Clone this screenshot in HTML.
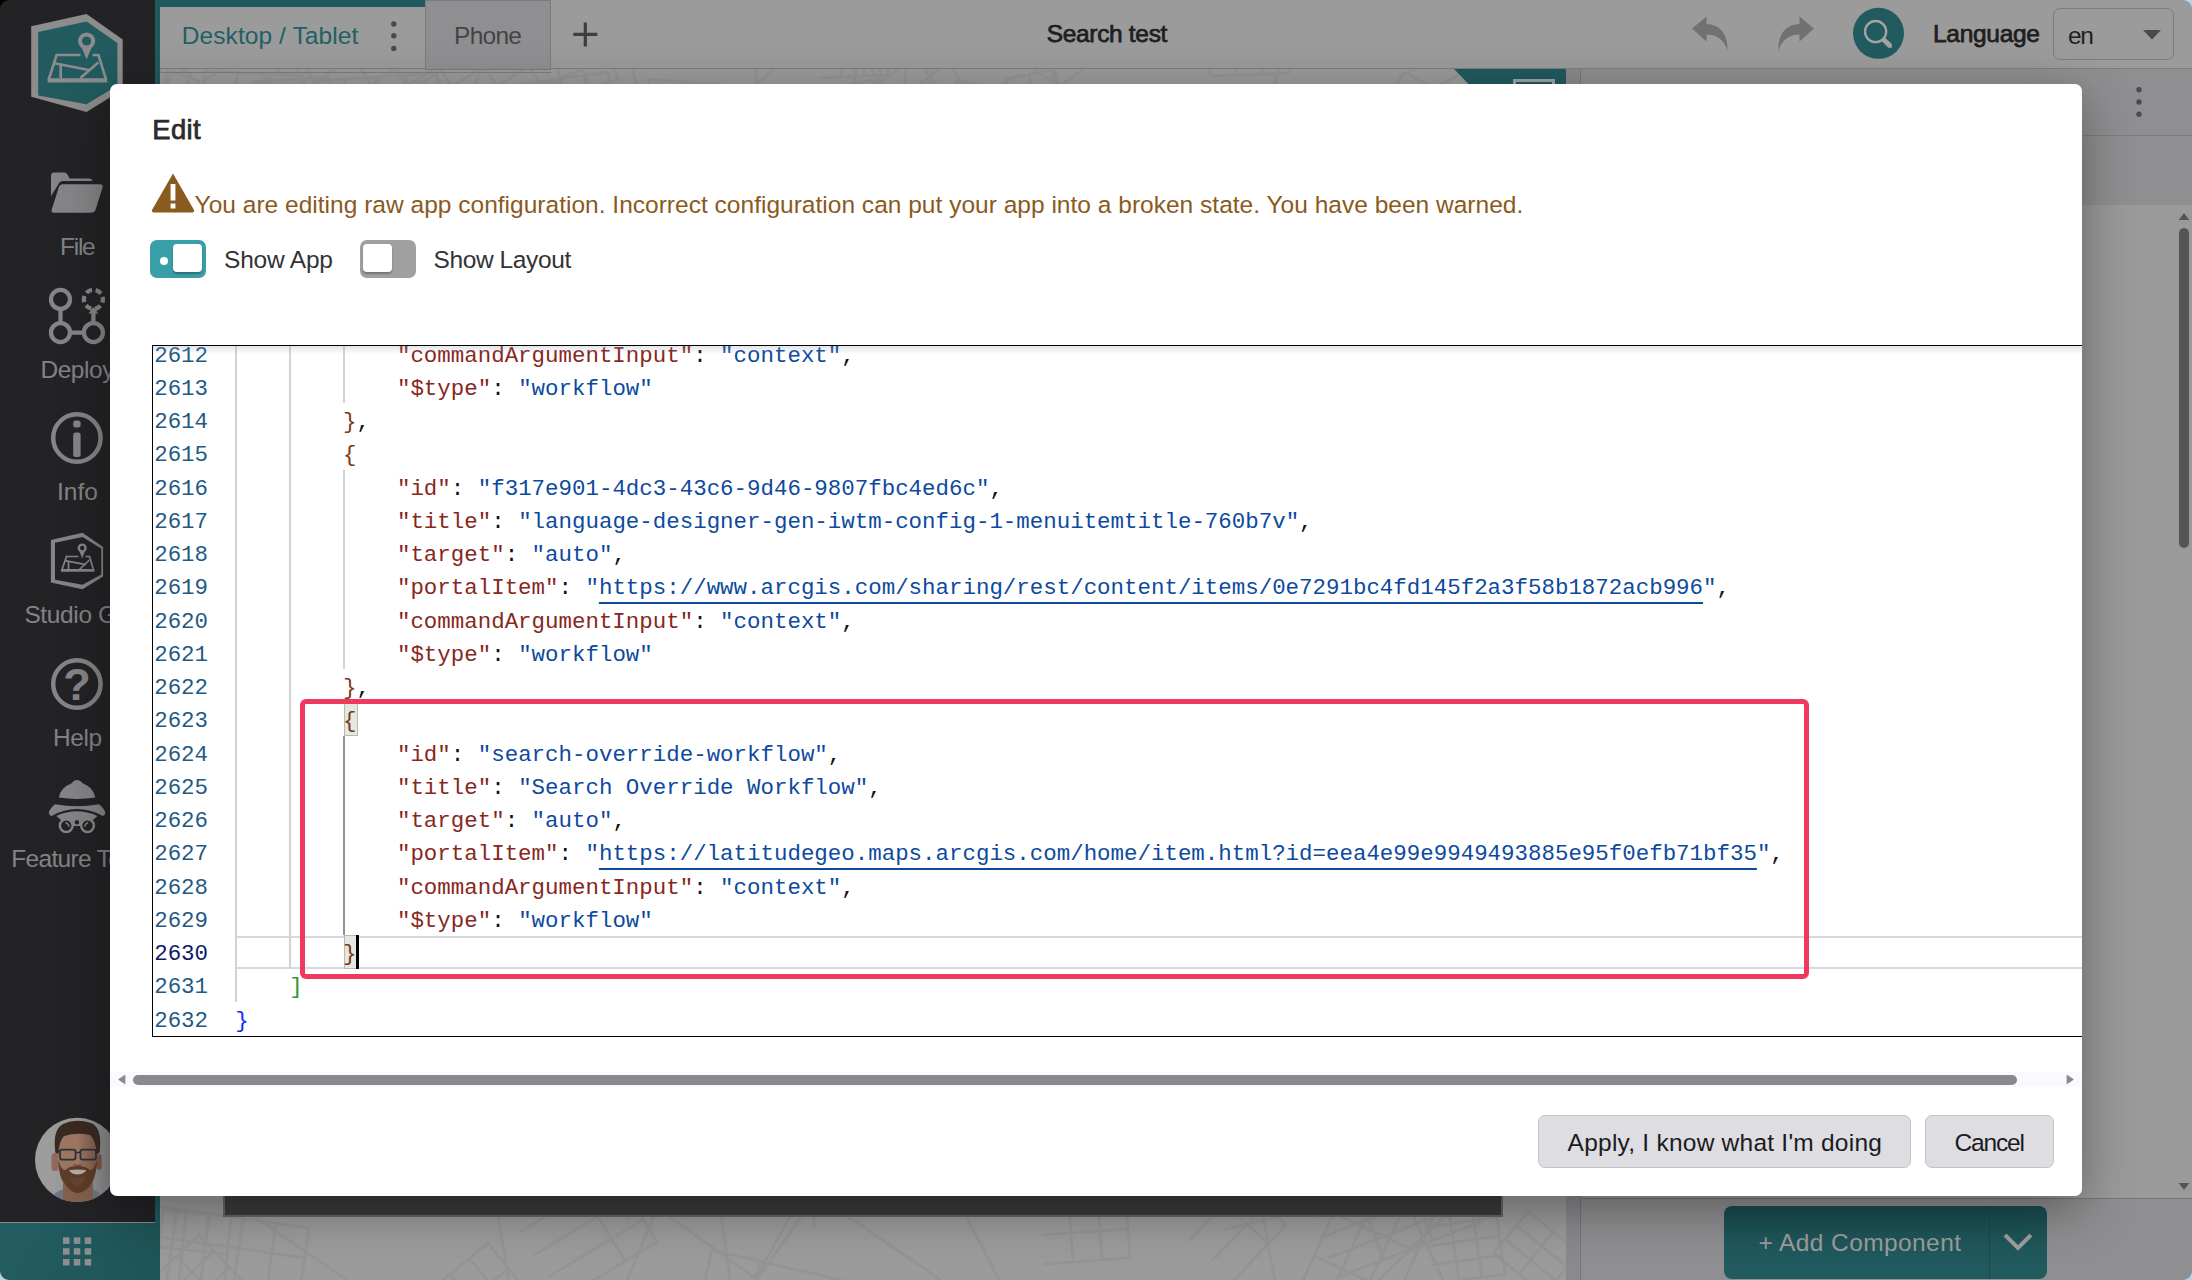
<!DOCTYPE html>
<html lang="en">
<head>
<meta charset="utf-8">
<title>Search test</title>
<style>
*{box-sizing:border-box;margin:0;padding:0}
html,body{width:2192px;height:1280px;overflow:hidden;background:#999a99}
body{position:relative;font-family:"Liberation Sans",sans-serif;color:#1e1e20}
.abs{position:absolute}
.t{position:absolute;white-space:nowrap;line-height:1;transform-origin:0 0}
.sb{-webkit-text-stroke:.75px currentColor}
/* ---------- app background (dimmed) ---------- */
#sidebar{left:0;top:0;width:155px;height:1222px;background:#232326;overflow:hidden}
#sideline{left:0;top:1222px;width:155px;height:1px;background:#8b8b8b}
#apps{left:0;top:1223px;width:160px;height:57px;background:linear-gradient(120deg,#225c60 20%,#1e5558 90%)}
#tealL{left:155px;top:0;width:5px;height:1223px;background:#205a5e}
#toolbar{left:160px;top:0;width:2032px;height:68px;background:#9a9b9a}
#tbline{left:160px;top:68px;width:2032px;height:1px;background:#7d7d80}
#tabA{left:160px;top:0;width:265px;height:7px;background:#205a5e}
#tabP{left:425px;top:0;width:126px;height:70px;background:#8f8f91;border:1px solid #7a7a7f}
#tabline2{left:160px;top:72px;width:391px;height:1px;background:#7d7d80}
#map{left:160px;top:69px;width:1406px;height:1211px;background:#9a9b9a;overflow:hidden}
#split{left:1566px;top:69px;width:14px;height:1211px;background:#8a8a8d}
#splitl{left:1580px;top:69px;width:1px;height:1211px;background:#77777a}
#rpanel{left:1581px;top:69px;width:611px;height:1211px;background:#999a99;overflow:hidden}
.sl{color:#838386;font-size:24.5px}
/* ---------- modal ---------- */
#modal{left:110px;top:84px;width:1972px;height:1112px;background:#fff;border-radius:7px;box-shadow:0 14px 50px rgba(0,0,0,.36)}
#ed{left:152px;top:345px;width:1930px;height:692px;border:1px solid #000;border-right:none;overflow:hidden;background:#fff}
.ln{position:absolute;left:0;height:33.25px;white-space:pre;font-family:"Liberation Mono",monospace;font-size:22.44px;line-height:33.25px}
.k{color:#87271d}.s{color:#0d4a9e}.p{color:#111}.u{color:#0d4a9e;text-decoration:underline;text-underline-offset:7.6px;text-decoration-thickness:1.8px}
.b1{color:#0431fa}.b2{color:#319331}.b3{color:#7b3814}
.num{color:#1f5a84}.act{color:#0b1a66}
.g{position:absolute;width:2px;background:#d3d3d3}
.btn{position:absolute;top:1115px;height:53px;background:#dddde2;border:1px solid #c3c3c9;border-radius:7px}
</style>
</head>
<body>
<!-- app chrome behind the dialog -->
<div id="toolbar" class="abs"></div>
<div id="tbline" class="abs"></div>
<div id="map" class="abs"><svg class="abs" style="left:0;top:0" width="1406" height="1211" viewBox="0 0 1406 1211"><path d="M320 0l-128 543M1119 0l-166 545M615 0l-791 614M187 1211l-972 -666M1322 0l165 962M1368 0l82 655M473 0l182 1158M895 0l226 1246M398 0l175 1230M597 1211l606 -868M1283 1211l-620 -1315M923 0l-684 521M595 1211l409 -740M1374 0l18 698M349 1211l-284 -1630M-75 1211l-317 -864M598 1211l-498 -357M234 0l-1104 762M839 1211l-439 -857M874 0l764 524M781 1211l-1173 -803M8 0l-356 1560M597 0l-129 1152M1219 1211l599 -581M467 1211l374 -880M171 0l-509 589M328 1174l61 75M309 1189l61 75M290 1205l61 75M271 1221l61 75M328 1174l-57 47M349 1199l-57 47M369 1224l-57 47M389 1249l-57 47M448 3l13 98M424 6l13 98M400 9l13 98M376 12l13 98M351 16l13 98M327 19l13 98M448 3l-121 17M452 35l-121 17M457 68l-121 17M892 1l12 64M869 6l12 64M846 10l12 64M892 1l-46 9M896 23l-46 9M797 11l73 16M791 38l73 16M785 65l73 16M779 92l73 16M797 11l-18 81M821 16l-18 81M846 22l-18 81M1343 12l-81 42M1332 -11l-81 42M1320 -34l-81 42M1308 -56l-81 42M1296 -79l-81 42M1285 -102l-81 42M1343 12l-59 -114M1316 26l-59 -114M144 7l-6 113M111 5l-6 113M77 3l-6 113M44 2l-6 113M144 7l-100 -5M142 44l-100 -5M970 1189l-86 6M968 1160l-86 6M966 1131l-86 6M970 1189l-4 -58M942 1191l-4 -58M913 1193l-4 -58M1277 1140l-59 129M1249 1127l-59 129M1221 1115l-59 129M1193 1102l-59 129M1277 1140l-84 -39M1257 1183l-84 -39M1238 1226l-84 -39M1218 1269l-84 -39M1129 4l-79 3M1129 -22l-79 3M1128 -47l-79 3M1127 -73l-79 3M1126 -98l-79 3M1129 4l-3 -102M1103 5l-3 -102M1077 6l-3 -102M1050 7l-3 -102M1345 1205l-70 10M1342 1186l-70 10M1339 1167l-70 10M1337 1148l-70 10M1334 1129l-70 10M1345 1205l-11 -76M1322 1209l-11 -76M1299 1212l-11 -76M277 4l4 68M246 6l4 68M215 8l4 68M184 10l4 68M154 12l4 68M277 4l-123 8M278 27l-123 8M280 50l-123 8M281 72l-123 8M169 8l9 123M144 9l9 123M119 11l9 123M94 13l9 123M169 8l-75 5M171 49l-75 5M1126 1156l-53 56M1105 1136l-53 56M1083 1115l-53 56M1126 1156l-43 -41M1108 1175l-43 -41M39 12l-33 89M12 2l-33 89M-15 -8l-33 89M-42 -18l-33 89M-68 -27l-33 89M-95 -37l-33 89M39 12l-134 -49M28 42l-134 -49M17 71l-134 -49M6 101l-134 -49M771 0l-12 147M746 -2l-12 147M721 -4l-12 147M696 -6l-12 147M771 0l-75 -6M767 49l-75 -6M39 1166l45 48M17 1187l45 48M-6 1209l45 48M-29 1230l45 48M-52 1252l45 48M-75 1273l45 48M39 1166l-114 108M54 1182l-114 108M70 1198l-114 108M85 1214l-114 108M497 1173l-96 58M484 1150l-96 58M470 1128l-96 58M456 1105l-96 58M497 1173l-41 -68M465 1192l-41 -68M1227 16l62 37M1213 39l62 37M1198 63l62 37M1184 87l62 37M1170 111l62 37M1155 135l62 37M1227 16l-72 120M1248 28l-72 120M458 10l-82 31M450 -10l-82 31M443 -31l-82 31M458 10l-16 -41M431 21l-16 -41M714 11l19 104M685 16l19 104M657 22l19 104M628 27l19 104M714 11l-86 15M720 46l-86 15M726 80l-86 15M733 115l-86 15M1135 1143l-72 18M1128 1112l-72 18M1120 1081l-72 18M1112 1051l-72 18M1135 1143l-23 -92M1111 1148l-23 -92M552 1181l146 34M545 1211l146 34M538 1241l146 34M531 1270l146 34M524 1300l146 34M552 1181l-28 119M600 1192l-28 119M1321 1153l-145 56M1313 1133l-145 56M1305 1113l-145 56M1298 1093l-145 56M1290 1073l-145 56M1282 1053l-145 56M1321 1153l-39 -100M1273 1172l-39 -100M1224 1191l-39 -100M1244 3l88 49M1228 33l88 49M1211 63l88 49M1195 92l88 49M1178 122l88 49M1162 151l88 49M1244 3l-82 148M1273 20l-82 148M1303 36l-82 148M275 6l30 54M253 19l30 54M231 31l30 54M210 43l30 54M188 55l30 54M166 67l30 54M275 6l-109 61M285 24l-109 61M295 42l-109 61M728 6l-70 3M726 -28l-70 3M724 -61l-70 3M723 -95l-70 3M728 6l-5 -101M704 7l-5 -101M681 8l-5 -101M382 18l-96 61M369 -3l-96 61M356 -23l-96 61M343 -44l-96 61M330 -65l-96 61M382 18l-53 -83M350 38l-53 -83M318 59l-53 -83M286 79l-53 -83M802 14l-54 40M788 -6l-54 40M773 -26l-54 40M758 -46l-54 40M802 14l-44 -60M784 27l-44 -60M892 16l92 20M887 41l92 20M882 65l92 20M892 16l-10 49M923 23l-10 49M953 29l-10 49M984 36l-10 49M587 18l-13 156M554 16l-13 156M522 13l-13 156M489 10l-13 156M587 18l-99 -8M583 70l-99 -8M579 123l-99 -8M71 1148l-11 109M48 1146l-11 109M26 1144l-11 109M3 1142l-11 109M71 1148l-68 -7M67 1185l-68 -7M380 16l84 4M379 42l84 4M378 68l84 4M377 95l84 4M380 16l-4 79M409 17l-4 79M437 19l-4 79M149 1159l-13 90M116 1155l-13 90M83 1150l-13 90M50 1145l-13 90M17 1140l-13 90M-16 1135l-13 90M149 1159l-166 -24M145 1189l-166 -24M1381 7l42 137M1349 17l42 137M1317 27l42 137M1285 37l42 137M1252 47l42 137M1381 7l-129 40M1395 53l-129 40M99 15l125 22M94 46l125 22M88 78l125 22M83 109l125 22M77 141l125 22M72 172l125 22M99 15l-28 157M141 22l-28 157M183 29l-28 157M842 14l85 46M833 30l85 46M825 46l85 46M816 62l85 46M808 77l85 46M799 93l85 46M842 14l-43 79M870 29l-43 79M898 44l-43 79M1368 1142l76 62M1356 1156l76 62M1345 1170l76 62M1333 1184l76 62M1368 1142l-34 42M1393 1163l-34 42M1418 1184l-34 42M392 13l114 33M386 33l114 33M381 52l114 33M392 13l-11 39M430 24l-11 39M468 35l-11 39M32 6l-63 116M5 -8l-63 116M-22 -23l-63 116M-48 -37l-63 116M-75 -51l-63 116M-101 -66l-63 116M32 6l-133 -72M11 45l-133 -72M-10 84l-133 -72M210 14l-120 74M195 -11l-120 74M179 -36l-120 74M163 -62l-120 74M148 -87l-120 74M132 -112l-120 74M210 14l-78 -127M170 39l-78 -127" stroke="#8b8b8b" stroke-width="2.600" fill="none" opacity=".42"/></svg>
<div class="abs" style="left:1294px;top:0;width:112px;height:16px;background:#205a5e;clip-path:polygon(0 0,100% 0,100% 100%,15.500px 100%)"></div>

<div class="abs" style="left:1353px;top:10px;width:42px;height:20px;border:3px solid #9fa3a2"></div>
<div class="abs" style="left:63px;top:1127px;width:1280px;height:21px;background:#3a3c3b;border:2px solid #66666a;border-top:none"></div>
</div>
<div id="split" class="abs"></div>
<div id="splitl" class="abs"></div>
<div id="rpanel" class="abs">
<div class="abs" style="left:0;top:0;width:611px;height:66px;background:#8f8f91"></div>
<div class="abs" style="left:0;top:66px;width:611px;height:1px;background:#7d7d80"></div>
<div class="abs" style="left:0;top:67px;width:611px;height:69px;background:#8f8f91"></div>
<svg class="abs" style="left:552px;top:16px" width="12" height="36" viewBox="0 0 12 36"><circle cx="6" cy="4.800" r="2.700" fill="#4b4b4e"/><circle cx="6" cy="17" r="2.700" fill="#4b4b4e"/><circle cx="6" cy="29.300" r="2.700" fill="#4b4b4e"/></svg>
<!-- vertical scrollbar -->
<div class="abs" style="left:598px;top:158.600px;width:9.500px;height:320px;border-radius:5px;background:#555557"></div>
<svg class="abs" style="left:597px;top:143px" width="12" height="9" viewBox="0 0 12 9"><path d="M6 1 L11.300 8 H0.700 Z" fill="#555557"/></svg>
<svg class="abs" style="left:597px;top:1113px" width="12" height="9" viewBox="0 0 12 9"><path d="M6 8 L11.300 1 H0.700 Z" fill="#555557"/></svg>
<div class="abs" style="left:0;top:1130px;width:611px;height:81px;background:#8f8f91"></div><div class="abs" style="left:0;top:1129px;width:611px;height:1px;background:#77777a"></div>
<!-- add component -->
<div class="abs" style="left:143px;top:1137px;width:323px;height:72.500px;border-radius:8px;background:linear-gradient(#1b4c4f,#215b5f 75%)"></div>
<div class="abs" style="left:408px;top:1137px;width:1px;height:72.500px;background:#1a484b"></div>
<svg class="abs" style="left:421px;top:1163px" width="32" height="20" viewBox="0 0 32 20"><path d="M3 3 L16 16 L29 3" fill="none" stroke="#9c9d9c" stroke-width="4"/></svg>
</div>
<div class="t" style="left:1758.40px;top:1231.46px;font-size:24.5px;letter-spacing:0.412px;color:#9c9d9c;">+ Add Component</div>
<div id="tabA" class="abs"></div>
<div id="tabP" class="abs"></div>
<div id="tabline2" class="abs"></div>
<!-- toolbar content -->
<div class="t" style="left:181.80px;top:23.96px;font-size:24.5px;letter-spacing:0.078px;color:#216064;">Desktop / Tablet</div>
<svg class="abs" style="left:388px;top:18px" width="12" height="36" viewBox="0 0 12 36"><circle cx="5.8" cy="6" r="2.7" fill="#4b4b4e"/><circle cx="5.8" cy="17.8" r="2.7" fill="#4b4b4e"/><circle cx="5.8" cy="30.4" r="2.7" fill="#4b4b4e"/></svg>
<div class="t" style="left:454.00px;top:23.96px;font-size:24.5px;letter-spacing:-0.711px;color:#434346;">Phone</div>
<svg class="abs" style="left:572px;top:21px" width="27" height="27" viewBox="0 0 27 27"><path d="M13.3 1.5V25.5M1.3 13.4H25.3" stroke="#3e3e41" stroke-width="3.2" fill="none"/></svg>
<div class="t sb" style="left:1046.70px;top:21.96px;font-size:24.5px;letter-spacing:-0.322px;color:#1e1e21;">Search test</div>
<svg class="abs" style="left:1690px;top:15px" width="40" height="38" viewBox="0 0 40 38"><path d="M2 13.5 L16.5 1.5 V9 C30 9.500 38 19 37.500 35.500 C34 25 27 19.500 16.500 19.500 V26.500 Z" fill="#717173"/></svg>
<svg class="abs" style="left:1776px;top:15px" width="40" height="38" viewBox="0 0 40 38"><path d="M38 13.5 L23.5 1.5 V9 C10 9.500 2 19 2.500 35.500 C6 25 13 19.500 23.500 19.500 V26.500 Z" fill="#717173"/></svg>
<svg class="abs" style="left:1852px;top:7px" width="54" height="54" viewBox="0 0 54 54"><circle cx="26.5" cy="26.35" r="25.5" fill="#215b5f"/><circle cx="23.6" cy="24.6" r="10.6" fill="none" stroke="#a3a4a3" stroke-width="2.3"/><path d="M29.4 33.7 L32.6 30.3 L39.8 37.1 L39.9 40.7 L36.3 40.7 Z" fill="#a3a4a3"/></svg>
<div class="t sb" style="left:1933.00px;top:21.96px;font-size:24.5px;letter-spacing:-0.287px;color:#1e1e21;">Language</div>
<div class="abs" style="left:2053px;top:8px;width:121px;height:52px;border:1px solid #7c7c80;border-radius:7px"></div>
<div class="t" style="left:2068.00px;top:23.66px;font-size:24.5px;letter-spacing:-1.252px;color:#1e1e21;">en</div>
<svg class="abs" style="left:2142px;top:29px" width="20" height="11" viewBox="0 0 20 11"><path d="M1 1 H19 L10 10.500 Z" fill="#4a4a4c"/></svg>
<div id="sidebar" class="abs">
<!-- logo -->
<svg class="abs" style="left:0;top:0" width="155" height="130" viewBox="0 0 155 130"><path d="M86.6 14 L31.2 26.3 V96.8 L86.6 112 L122.7 89.4 V39.4 Z" fill="#8c8c8d"/><path d="M86.6 21.4 L38.2 32 V95.4 L86.6 104.3 L117.4 85.6 V43 Z" fill="#215b5f"/>
<g fill="none" stroke="#8c8c8d" stroke-width="2.6"><path d="M80.500 55 H56.6 L48.6 80 M92.500 55 H98.5 L106.2 80"/><path d="M47.6 80.400 H107.2" stroke-width="4.400"/><path d="M60.7 65.4 V78 M54.4 63.2 L90 70.200 M98.3 62.6 L80.4 78"/><circle cx="86.6" cy="41" r="6.6" stroke-width="4"/></g><path d="M81.200 46.500 L86.6 59.4 L92 46.500 Z" fill="#8c8c8d"/></svg>
<!-- File -->
<svg class="abs" style="left:48px;top:170px" width="58" height="46" viewBox="0 0 58 46"><path d="M3 26 V6 Q3 2.600 6.400 2.600 H16 Q18.500 2.600 19.600 4.800 L21.500 8.500 H41 Q44 8.500 44.400 11 H15 Q11.500 11 10.300 14.500 Z" fill="#858587"/><path d="M14.800 14.300 H52 Q55.600 14.300 54.500 17.800 L47.600 39.500 Q46.600 42.800 43 42.800 H6.500 Q2.600 42.800 3.800 39.300 L10.800 17.300 Q11.800 14.300 14.800 14.300 Z" fill="#858587"/></svg>
<div class="t" style="left:60.00px;top:234.76px;font-size:24.5px;letter-spacing:-1.259px;color:#838386;">File</div>
<!-- Deploy -->
<svg class="abs" style="left:46px;top:285px" width="62" height="62" viewBox="0 0 62 62"><g fill="none" stroke="#858587" stroke-width="4.300"><circle cx="14.500" cy="14.400" r="9.500"/><circle cx="14.500" cy="47.600" r="9.500"/><circle cx="47.400" cy="47.600" r="9.500"/><circle cx="47.400" cy="14.400" r="9.500" stroke-dasharray="6.300 3.650" stroke-dashoffset="3"/><path d="M14.500 24 V38 M24 47.600 H38 M47.400 38 V27"/></g><path d="M42.500 28.500 L47.400 22 L52.300 28.500 Z" fill="#858587"/></svg>
<div class="t" style="left:40.40px;top:357.76px;font-size:24.5px;letter-spacing:-0.453px;color:#838386;">Deploy</div>
<!-- Info -->
<svg class="abs" style="left:48px;top:410px" width="58" height="58" viewBox="0 0 58 58"><circle cx="28.900" cy="28" r="23.700" fill="none" stroke="#858587" stroke-width="4.500"/><rect x="25.200" y="10.500" width="7.400" height="7" rx="2.500" fill="#858587"/><rect x="25.200" y="22.500" width="7.400" height="24.500" rx="2.500" fill="#858587"/></svg>
<div class="t" style="left:57.00px;top:480.26px;font-size:24.5px;letter-spacing:0.045px;color:#838386;">Info</div>
<!-- Studio Go -->
<svg class="abs" style="left:48px;top:530px" width="58" height="62" viewBox="0 0 58 62"><path fill-rule="evenodd" d="M34.500 2.800 L2.900 10 V52.500 L34.500 59.250 L55.100 46.600 V17 Z M34.500 7 L53.250 18.400 V44.400 L34.500 54.700 L7 49.700 V12.800 Z" fill="#858587"/><g fill="none" stroke="#858587" stroke-width="1.700"><path d="M30.500 26.500 H18.500 L14 39.500 M37.500 26.500 H41.500 L45.400 39.500"/><path d="M13 40.400 H46.400" stroke-width="2.800"/><path d="M20.500 32 V39.500 M16.800 30.600 L38 34.600 M41.300 30 L31.500 39.500"/><circle cx="34.200" cy="18" r="3.400" stroke-width="2.400"/></g><path d="M31.300 21 L34.200 28.600 L37.100 21 Z" fill="#858587"/></svg>
<div class="t" style="left:24.40px;top:602.86px;font-size:24.5px;letter-spacing:-0.370px;color:#838386;">Studio Go</div>
<!-- Help -->
<svg class="abs" style="left:48px;top:656px" width="58" height="58" viewBox="0 0 58 58"><circle cx="28.900" cy="28" r="23.700" fill="none" stroke="#858587" stroke-width="4.500"/><text x="28.900" y="44.300" text-anchor="middle" font-family="Liberation Sans, sans-serif" font-weight="bold" font-size="45" fill="#858587">?</text></svg>
<div class="t" style="left:53.10px;top:726.06px;font-size:24.5px;letter-spacing:-0.463px;color:#838386;">Help</div>
<!-- Feature Tour -->
<svg class="abs" style="left:46px;top:778px" width="62" height="60" viewBox="0 0 62 60"><g fill="#858587"><path d="M30.900 2 Q33.500 2 37.100 5.400 Q47.500 9.500 49.300 19.500 Q31 22.300 12.750 19.500 Q14.500 9.500 25.250 5.400 Q28.300 2 30.900 2 Z"/><path d="M9 26.250 Q30.900 30 53 26.250 Q58 30 59.300 34.500 Q59.300 37 56.800 37.900 Q44 31 30.900 31 Q18 31 5.600 37.900 Q2.750 37 2.750 34.500 Q4 30 9 26.250 Z"/><path d="M10.250 38 Q30.900 28.700 51.500 38 L47 42 L37 48 L25 48 L15 42 Z"/></g><circle cx="30.900" cy="44.200" r="2.200" fill="#232326"/><g fill="#232326" stroke="#858587" stroke-width="2.500"><circle cx="20.250" cy="47.600" r="6.400"/><circle cx="41.500" cy="47.600" r="6.400"/></g><path d="M19.500 44.500 Q22.500 45.500 23.300 48.500 M42.200 44.500 Q39.300 45.500 38.500 48.500" stroke="#858587" stroke-width="1.500" fill="none"/></svg>
<div class="t" style="left:11.30px;top:847.26px;font-size:24.5px;letter-spacing:-0.678px;color:#838386;">Feature Tour</div>
<!-- avatar -->
<svg class="abs" style="left:33px;top:1116px" width="90" height="90" viewBox="0 0 90 90"><defs><clipPath id="av"><circle cx="44.200" cy="43.900" r="42.200"/></clipPath><linearGradient id="avg" x1="0" x2="1"><stop offset="0" stop-color="#9d9e9d"/><stop offset=".55" stop-color="#979897"/><stop offset="1" stop-color="#7c7d7c"/></linearGradient><linearGradient id="skn" x1="0" x2="1"><stop offset="0" stop-color="#9a7561"/><stop offset=".5" stop-color="#a17966"/><stop offset="1" stop-color="#7e5a49"/></linearGradient></defs><filter id="bl"><feGaussianBlur stdDeviation=".7"/></filter><g clip-path="url(#av)"><rect width="90" height="90" fill="url(#avg)"/><g filter="url(#bl)">
<path d="M14 90 Q18 76 31 73 L59 73 Q70 76 74 90 Z" fill="#6c7789"/>
<path d="M30 66 H60 V90 H30 Z" fill="#845f4d"/>
<rect x="18.400" y="37" width="7" height="18" rx="3.500" fill="#93695a"/><rect x="64" y="38" width="4.600" height="16" rx="2.300" fill="#7c5646"/>
<path d="M24.500 40 Q23 16 44.500 15 Q66 16 64.500 40 Q64 60 58 68 Q52 76 44.500 76 Q37 76 31 68 Q25 60 24.500 40 Z" fill="url(#skn)"/>
<path d="M22.500 37 Q19 14 30 8 Q43 2 58 7 Q70 12 66.500 37 L63.500 38 Q63 24 57 19 Q44 16 31 20 Q26 25 25.500 38 Z" fill="#3a2c23"/>
<path d="M25 44 Q26 62 33 70 Q39 77 44.500 77 Q51 77 57 70 Q63 62 64.300 44 Q61 54 57 54 Q53 50 44.500 50 Q36 50 32.500 54 Q28 54 25 44 Z" fill="#5b3c2a"/>
<path d="M36 54.200 Q44.500 52.800 53.500 54.200 Q50 58.600 44.500 58.600 Q39 58.600 36 54.200 Z" fill="#b9aca2"/>
<path d="M37 60.500 Q44.500 63 52 60.500 Q50 70 44.500 70 Q39 70 37 60.500 Z" fill="#6a4632" opacity=".8"/>
<g fill="none" stroke="#2b3138" stroke-width="1.700"><rect x="27" y="33.600" width="15.500" height="10" rx="2"/><rect x="47.500" y="33.600" width="15.500" height="10" rx="2"/><path d="M42.500 36.500 H47.500 M27 35.500 L22.500 34.500 M63 35.500 L66.500 34.500"/></g>
<path d="M40.500 48.500 Q44.500 50.500 48.500 48.500" stroke="#7a5342" stroke-width="1.600" fill="none"/>
</g></g></svg>
</div>
<div id="sideline" class="abs"></div>
<div id="tealL" class="abs"></div>
<div id="apps" class="abs"><svg class="abs" style="left:62px;top:14px" width="30" height="30" viewBox="0 0 30 30"><g fill="#8e8e90"><rect x="1" y="0.400" width="6.500" height="6.500"/><rect x="11.800" y="0.400" width="6.500" height="6.500"/><rect x="22.700" y="0.400" width="6.500" height="6.500"/><rect x="1" y="11.200" width="6.500" height="6.500"/><rect x="11.800" y="11.200" width="6.500" height="6.500"/><rect x="22.700" y="11.200" width="6.500" height="6.500"/><rect x="1" y="22" width="6.500" height="6.500"/><rect x="11.800" y="22" width="6.500" height="6.500"/><rect x="22.700" y="22" width="6.500" height="6.500"/></g></svg></div>
<!-- dialog -->
<div id="modal" class="abs"></div>
<!-- window corners -->
<svg class="abs" style="left:0;top:0" width="10" height="10" viewBox="0 0 10 10"><path d="M0 0 H9 A9 9 0 0 0 0 9 Z" fill="#000"/></svg>
<svg class="abs" style="left:0;top:1270px" width="10" height="10" viewBox="0 0 10 10"><path d="M0 10 H9 A9 9 0 0 1 0 1 Z" fill="#b9d3e6"/></svg>
<svg class="abs" style="left:2182px;top:0" width="10" height="10" viewBox="0 0 10 10"><path d="M10 0 H1 A9 9 0 0 1 10 9 Z" fill="#b9d3e6"/></svg>
<svg class="abs" style="left:2182px;top:1270px" width="10" height="10" viewBox="0 0 10 10"><path d="M10 10 H1 A9 9 0 0 0 10 1 Z" fill="#b9d3e6"/></svg>
<!-- dialog content (page coordinates) -->
<div class="t sb" style="left:152.30px;top:115.81px;font-size:27.4px;letter-spacing:0.362px;color:#2b2b2e;">Edit</div>
<svg class="abs" style="left:150px;top:172px" width="46" height="42" viewBox="0 0 46 42"><path d="M23 1.6 L44 38 Q44.6 40.4 42 40.4 L4 40.4 Q1.4 40.4 2 38 Z" fill="#8a5a1e"/><rect x="20.6" y="12" width="4.8" height="16.5" fill="#fff"/><rect x="20.6" y="31.5" width="4.8" height="5" fill="#fff"/></svg>
<div class="t" style="left:194.60px;top:193.16px;font-size:24.5px;letter-spacing:0.013px;color:#8a5a1e;">You are editing raw app configuration. Incorrect configuration can put your app into a broken state. You have been warned.</div>
<div class="abs" style="left:150px;top:240px;width:56px;height:38px;border-radius:7px;background:#389fa7"></div>
<div class="abs" style="left:159.5px;top:256.5px;width:8px;height:8px;border-radius:50%;background:#fff"></div>
<div class="abs" style="left:173px;top:243.5px;width:28.500px;height:28.500px;border-radius:4px;background:#fff;box-shadow:0 2px 2px rgba(0,0,0,.28)"></div>
<div class="t" style="left:224.00px;top:248.46px;font-size:24.5px;letter-spacing:-0.191px;color:#333336;">Show App</div>
<div class="abs" style="left:360px;top:240px;width:56px;height:38px;border-radius:7px;background:#a0a0a0"></div>
<div class="abs" style="left:363px;top:243.5px;width:28.500px;height:28.500px;border-radius:4px;background:#fff;box-shadow:0 2px 2px rgba(0,0,0,.28)"></div>
<div class="t" style="left:433.50px;top:248.46px;font-size:24.5px;letter-spacing:-0.395px;color:#333336;">Show Layout</div>
<div id="ed" class="abs">
<div class="abs" style="left:82px;top:590.20px;width:1900px;height:32.6px;border:2.6px solid #d8d9dd"></div>
<div class="g" style="left:82.0px;top:-9.10px;height:665.00px;background:#d3d3d3"></div>
<div class="g" style="left:136.4px;top:-9.10px;height:631.75px;background:#d3d3d3"></div>
<div class="g" style="left:190.3px;top:-9.10px;height:66.50px;background:#d3d3d3"></div>
<div class="g" style="left:190.3px;top:123.90px;height:199.50px;background:#d3d3d3"></div>
<div class="g" style="left:190.3px;top:389.90px;height:199.50px;background:#939393"></div>
<div class="abs" style="left:190.6px;top:356.65px;width:14.2px;height:33.25px;background:#e4e9e0;border:1px solid #b9b9b9"></div>
<div class="abs" style="left:190.6px;top:589.40px;width:14.2px;height:33.25px;background:#e4e9e0;border:1px solid #b9b9b9"></div>
<div class="abs" style="left:202.8px;top:589.40px;width:3.2px;height:33.25px;background:#000"></div>
<div class="ln num" style="left:1.2px;top:-6.30px">2612</div>
<div class="ln" style="left:243.94px;top:-6.30px"><span class="k">"commandArgumentInput"</span><span class="p">: </span><span class="s">"context"</span><span class="p">,</span></div>
<div class="ln num" style="left:1.2px;top:26.95px">2613</div>
<div class="ln" style="left:243.94px;top:26.95px"><span class="k">"$type"</span><span class="p">: </span><span class="s">"workflow"</span></div>
<div class="ln num" style="left:1.2px;top:60.20px">2614</div>
<div class="ln" style="left:190.06px;top:60.20px"><span class="b3">}</span><span class="p">,</span></div>
<div class="ln num" style="left:1.2px;top:93.45px">2615</div>
<div class="ln" style="left:190.06px;top:93.45px"><span class="b3">{</span></div>
<div class="ln num" style="left:1.2px;top:126.70px">2616</div>
<div class="ln" style="left:243.94px;top:126.70px"><span class="k">"id"</span><span class="p">: </span><span class="s">"f317e901-4dc3-43c6-9d46-9807fbc4ed6c"</span><span class="p">,</span></div>
<div class="ln num" style="left:1.2px;top:159.95px">2617</div>
<div class="ln" style="left:243.94px;top:159.95px"><span class="k">"title"</span><span class="p">: </span><span class="s">"language-designer-gen-iwtm-config-1-menuitemtitle-760b7v"</span><span class="p">,</span></div>
<div class="ln num" style="left:1.2px;top:193.20px">2618</div>
<div class="ln" style="left:243.94px;top:193.20px"><span class="k">"target"</span><span class="p">: </span><span class="s">"auto"</span><span class="p">,</span></div>
<div class="ln num" style="left:1.2px;top:226.45px">2619</div>
<div class="ln" style="left:243.94px;top:226.45px"><span class="k">"portalItem"</span><span class="p">: </span><span class="s">"</span><span class="u">https://www.arcgis.com/sharing/rest/content/items/0e7291bc4fd145f2a3f58b1872acb996</span><span class="s">"</span><span class="p">,</span></div>
<div class="ln num" style="left:1.2px;top:259.70px">2620</div>
<div class="ln" style="left:243.94px;top:259.70px"><span class="k">"commandArgumentInput"</span><span class="p">: </span><span class="s">"context"</span><span class="p">,</span></div>
<div class="ln num" style="left:1.2px;top:292.95px">2621</div>
<div class="ln" style="left:243.94px;top:292.95px"><span class="k">"$type"</span><span class="p">: </span><span class="s">"workflow"</span></div>
<div class="ln num" style="left:1.2px;top:326.20px">2622</div>
<div class="ln" style="left:190.06px;top:326.20px"><span class="b3">}</span><span class="p">,</span></div>
<div class="ln num" style="left:1.2px;top:359.45px">2623</div>
<div class="ln" style="left:190.06px;top:359.45px"><span class="b3">{</span></div>
<div class="ln num" style="left:1.2px;top:392.70px">2624</div>
<div class="ln" style="left:243.94px;top:392.70px"><span class="k">"id"</span><span class="p">: </span><span class="s">"search-override-workflow"</span><span class="p">,</span></div>
<div class="ln num" style="left:1.2px;top:425.95px">2625</div>
<div class="ln" style="left:243.94px;top:425.95px"><span class="k">"title"</span><span class="p">: </span><span class="s">"Search Override Workflow"</span><span class="p">,</span></div>
<div class="ln num" style="left:1.2px;top:459.20px">2626</div>
<div class="ln" style="left:243.94px;top:459.20px"><span class="k">"target"</span><span class="p">: </span><span class="s">"auto"</span><span class="p">,</span></div>
<div class="ln num" style="left:1.2px;top:492.45px">2627</div>
<div class="ln" style="left:243.94px;top:492.45px"><span class="k">"portalItem"</span><span class="p">: </span><span class="s">"</span><span class="u">https://latitudegeo.maps.arcgis.com/home/item.html?id=eea4e99e9949493885e95f0efb71bf35</span><span class="s">"</span><span class="p">,</span></div>
<div class="ln num" style="left:1.2px;top:525.70px">2628</div>
<div class="ln" style="left:243.94px;top:525.70px"><span class="k">"commandArgumentInput"</span><span class="p">: </span><span class="s">"context"</span><span class="p">,</span></div>
<div class="ln num" style="left:1.2px;top:558.95px">2629</div>
<div class="ln" style="left:243.94px;top:558.95px"><span class="k">"$type"</span><span class="p">: </span><span class="s">"workflow"</span></div>
<div class="ln num act" style="left:1.2px;top:592.20px">2630</div>
<div class="ln" style="left:190.06px;top:592.20px"><span class="b3">}</span></div>
<div class="ln num" style="left:1.2px;top:625.45px">2631</div>
<div class="ln" style="left:136.18px;top:625.45px"><span class="b2">]</span></div>
<div class="ln num" style="left:1.2px;top:658.70px">2632</div>
<div class="ln" style="left:82.30px;top:658.70px"><span class="b1">}</span></div>
<div class="abs" style="left:0;top:0;width:1930px;height:8px;background:linear-gradient(rgba(150,160,175,.28),rgba(150,160,175,0))"></div>
<div class="abs" style="left:147.4px;top:353.2px;width:1508.2px;height:279.8px;border:5.6px solid #ee3a5f;border-radius:6px"></div>
</div>
<!-- horizontal scrollbar -->
<div class="abs" style="left:110px;top:1072px;width:1972px;height:14.5px;background:#fafafc"></div>
<div class="abs" style="left:133px;top:1075px;width:1884px;height:9.5px;border-radius:5px;background:#8a8a8c"></div>
<svg class="abs" style="left:117px;top:1074px" width="9" height="11" viewBox="0 0 9 11"><path d="M8.4 0.6 L8.4 10.4 L1 5.5 Z" fill="#8a8a8c"/></svg>
<svg class="abs" style="left:2066px;top:1074px" width="9" height="11" viewBox="0 0 9 11"><path d="M0.6 0.6 L0.6 10.4 L8 5.5 Z" fill="#8a8a8c"/></svg>
<!-- buttons -->
<div class="btn" style="left:1538px;width:373px"></div>
<div class="t" style="left:1567.60px;top:1130.66px;font-size:24.5px;letter-spacing:0.237px;color:#1b1b1e;">Apply, I know what I'm doing</div>
<div class="btn" style="left:1925px;width:129px"></div>
<div class="t" style="left:1954.40px;top:1130.66px;font-size:24.5px;letter-spacing:-1.133px;color:#1b1b1e;">Cancel</div>
</body>
</html>
